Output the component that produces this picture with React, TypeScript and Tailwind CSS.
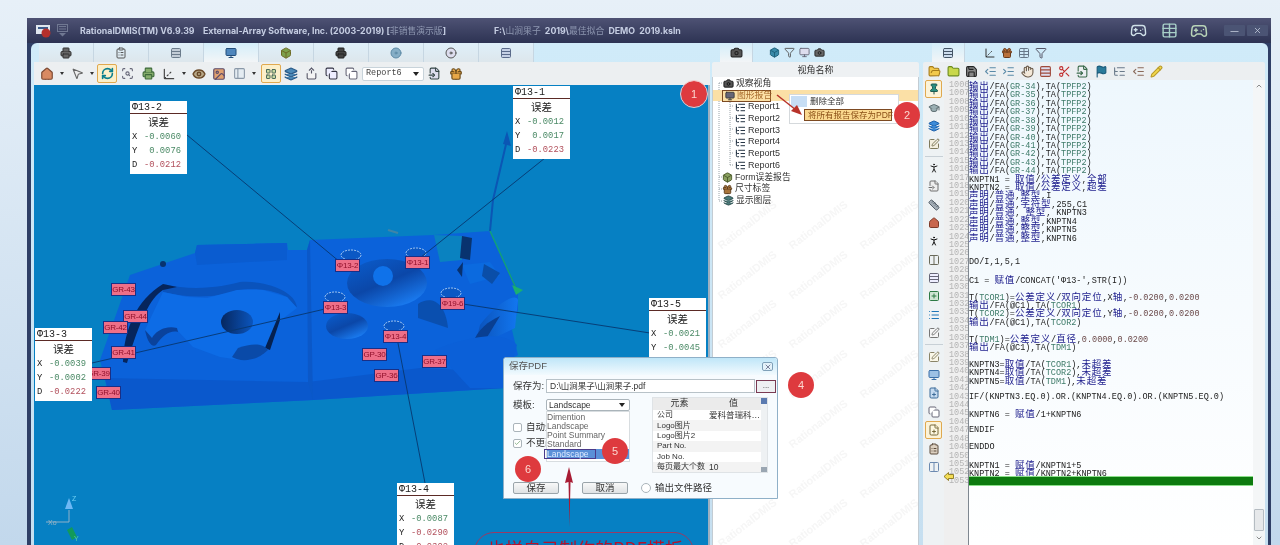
import type { ReactNode } from 'react';
import {
  House, MousePointer2, RefreshCw, ScanSearch, Printer, Axis3d, Eye, Image, PanelLeft, LayoutGrid, Layers, SquarePen,
  Save, Folder, FolderOpen, Hand, ListTree, X, Camera, Box, Filter, Monitor, Flag, Pencil, Gift, Copy, Share,
  IndentIncrease, IndentDecrease, Scissors, Pin, GraduationCap, Gamepad2, Table, Check, PersonStanding, Ruler,
  SquarePlus, List, FilePlus, FileInput, Columns2, ChevronDown, ChevronUp, ClipboardList, Disc,
} from 'lucide-react';

const cjk = '"Noto Sans CJK SC"';

/* ---------- small pieces ---------- */

function Tool({ children, active, wide }: { children: ReactNode; active?: boolean; wide?: boolean }) {
  return (
    <div className={`flex h-[19px] items-center justify-center ${wide ? 'w-[21px]' : 'w-[20px]'} ${active ? 'rounded-[2px] border border-[#e0a94f] bg-[#fcefc9]' : ''}`}>
      {children}
    </div>
  );
}

function Caret() {
  return <div className="h-0 w-0 mx-[3px] border-x-[2px] border-t-[3px] border-x-transparent border-t-[#333]" />;
}

function Tab({ children, active, w }: { children: ReactNode; active?: boolean; w: string }) {
  return (
    <div className={`flex h-[19px] items-center justify-center border-r border-[#c6d6e2] ${w} ${active ? 'bg-linear-to-b from-[#d4eefa] to-[#f2f5f7]' : 'bg-linear-to-b from-[#dff0fa] to-[#dde6ec]'}`}>
      {children}
    </div>
  );
}

function Callout({ name, rows, pos }: { name: string; rows: { k: string; v: string; tone: string }[]; pos: string }) {
  return (
    <div className={`absolute w-[57px] bg-white pb-[2px] text-[#222] ${pos}`}>
      <div className="h-[13px] border-b border-[#5b2a25] pl-[2px] text-[10px] leading-[13px] font-['Liberation_Mono',monospace]">{name}</div>
      <div className="h-[16px] text-center text-[10.5px] leading-[16px]" style={{ fontFamily: cjk }}>误差</div>
      {rows.map(r => (
        <div key={r.k} className="flex h-[14px] whitespace-pre pl-[2px] text-[8.8px] leading-[14px] font-['Liberation_Mono',monospace]">
          <span className="w-[12px]">{r.k}</span>
          <span className={r.tone}>{r.v}</span>
        </div>
      ))}
    </div>
  );
}

function Label({ text, pos }: { text: string; pos: string }) {
  return (
    <div className={`absolute flex h-[13px] w-[25px] items-center justify-center border border-[#1a2f86] bg-[#ee6f88] text-[8px] tracking-[-0.2px] text-[#8f0f2a] font-['Liberation_Sans',sans-serif] ${pos}`}>
      {text}
    </div>
  );
}

function Badge({ n, pos }: { n: number; pos: string }) {
  return (
    <div className={`absolute flex h-[26px] w-[26px] items-center justify-center rounded-full bg-[#de3a3e] text-[11px] text-[#fbd7d0] font-['Liberation_Sans',sans-serif] ${pos}`}>
      {n}
    </div>
  );
}

function Watermarks({ count }: { count: number }) {
  return (
    <div className="pointer-events-none absolute inset-0 grid grid-cols-3 content-start gap-x-[8px] gap-y-[38px] overflow-hidden pt-[145px]">
      {Array.from({ length: count }).map((_, i) => (
        <span key={i} className="-rotate-[38deg] whitespace-nowrap text-[11px] font-semibold text-[#f6f6f6] font-['Liberation_Sans',sans-serif]">RationalDMIS</span>
      ))}
    </div>
  );
}

/* ---------- 3D part ---------- */

function PartModel() {
  const wire = { stroke: '#d9ecff', strokeWidth: 0.7, strokeDasharray: '2 1', fill: '#0b58c4' };
  return (
    <svg className="absolute inset-0" width="674" height="460" viewBox="34 85 674 460" fill="none">
      <defs>
        <linearGradient id="bowl" x1="0" y1="0" x2="0.7" y2="1">
          <stop offset="0" stopColor="#0a5ecf" />
          <stop offset="0.55" stopColor="#0b47a8" />
          <stop offset="1" stopColor="#1a7cf2" />
        </linearGradient>
        <linearGradient id="dark" x1="0" y1="0" x2="1" y2="0">
          <stop offset="0" stopColor="#06275f" />
          <stop offset="1" stopColor="#0b55bd" />
        </linearGradient>
        <linearGradient id="cyl" x1="0" y1="0" x2="1" y2="0">
          <stop offset="0" stopColor="#0a50b8" />
          <stop offset="1" stopColor="#1277f0" />
        </linearGradient>
      </defs>

      {/* body */}
      <path d="M130,275 L195,253 L197,245 L287,243 L288,250 L307,250 L310,240 L433,235 L490,231 L518,290 L518,310 L512,330 L518,355 L505,362 L505,388 L313,400 L112,410 L105,380 L100,360 Z" fill="#0b62da" />
      <path d="M105,378 L308,382 L420,368 L505,372 L505,388 L313,400 L112,410 Z" fill="#0a58cc" />
      <path d="M195,253 L197,245 L287,243 L287,260 L197,265 Z" fill="#0a5cd0" />
      <path d="M307,250 L310,240 L313,400 L308,382 Z" fill="#0b58c8" />

      {/* s-shaped pocket */}
      <path d="M163,284 C195,292 225,286 240,282 C262,280 296,290 297,308 L287,297 C270,288 250,288 237,290 C225,296 195,300 163,292 Z" fill="#0a53bc" />
      <path d="M163,292 L187,297 L207,298 L237,290 L263,290 L287,297 L297,308 L277,323 L265,350 L240,360 L220,357 L193,347 L177,330 L163,328 L152,340 L145,330 L153,313 Z" fill="#0d6ce6" />
      <path d="M123,362 C124,330 136,300 163,284 L177,287 L163,290 C150,298 140,320 127,363 Z" fill="#06255c" />
      <path d="M145,330 C148,345 153,347 156,345 C163,335 170,330 178,332 L177,328 C165,325 155,332 152,338 Z" fill="#0a429c" />
      <path d="M280,312 L265,348 L270,350 L280,320 Z" fill="#05204f" />
      <path d="M238,348 C250,344 262,342 268,350 C256,362 240,362 232,357 Z" fill="#0a4aa8" />
      <ellipse cx="237" cy="322" rx="16" ry="12" fill="url(#dark)" />
      <circle cx="163" cy="264" r="3" fill="#08336f" />

      {/* right block holes */}
      <ellipse cx="387" cy="283" rx="40" ry="24" fill="url(#bowl)" />
      <ellipse cx="383" cy="276" rx="10" ry="10" fill="#0f72ea" />
      <ellipse cx="347" cy="326" rx="21" ry="13" fill="url(#bowl)" />
      <path d="M418,304 C430,296 445,300 448,328 L418,318 Z" fill="#0a4faf" />
      <path d="M434,235 L440,262 L462,260 L462,236 Z" fill="#0a82c0" />
      <path d="M462,236 L472,238 L470,260 L460,258 Z" fill="#08336f" />
      <path d="M462,265 L490,262 L500,276 L470,284 Z" fill="#0b6adf" />
      <path d="M484,264 L500,273 L492,284 L482,276 Z" fill="#0a4ea8" />
      <path d="M457,270 L463,262 L462,277 Z" fill="#07306e" />
      <path d="M480,325 C495,305 515,292 518,300 L515,328 C500,335 490,340 475,345 Z" fill="url(#cyl)" />
      <path d="M472,345 C478,328 488,322 500,316 L478,352 Z" fill="#093f92" />
      <path d="M435,350 C445,345 500,325 517,345 L512,362 L505,388 L470,388 Z" fill="#0b60d8" />

      {/* wire circles above the labels */}
      <ellipse cx="351" cy="255" rx="10" ry="5" {...wire} />
      <ellipse cx="416" cy="253" rx="10" ry="5" {...wire} />
      <ellipse cx="335" cy="297" rx="10" ry="5" {...wire} />
      <ellipse cx="451" cy="293" rx="10" ry="5" {...wire} />
      <ellipse cx="394" cy="326" rx="10" ry="5" {...wire} />

      {/* axes on the part */}
      <path d="M490,231 L493,200 L507,140" stroke="#0b56b4" strokeWidth="2" />
      <path d="M507,131 L511,146 L503,144 Z" fill="#0b56b4" />
      <path d="M490,231 L516,288" stroke="#12a07a" strokeWidth="1.5" />
      <path d="M512,285 L523,290 L516,295 Z" fill="#1bb070" />
      <path d="M388,230 L398,233" stroke="#3f84a8" strokeWidth="2" />

      {/* leader lines */}
      <path d="M187,135 L340,262 M545,158 L420,258 M92,363 L325,309 M650,333 L463,304 M425,483 L397,338" stroke="#08376e" strokeWidth="0.9" />

      {/* corner triad */}
      <path d="M69,522 L69,510 M69,522 L46,522" stroke="#8fb0c8" strokeWidth="1" />
      <path d="M69,498 L73,509 L65,509 Z" fill="#6db8f5" />
      <path d="M67,530 L72,527 L77,537 L72,540 Z" fill="#129a5a" />
      <text x="72" y="501" fontSize="7" fill="#6fd0f5" fontFamily="Liberation Sans">Z</text>
      <text x="48" y="525" fontSize="7" fill="#9ab4c4" fontFamily="Liberation Sans">Xo</text>
      <text x="74" y="541" fontSize="7" fill="#58d0a0" fontFamily="Liberation Sans">Y</text>
    </svg>
  );
}

/* ---------- editor ---------- */

const code: string[] = [
  ...[34, 35, 36, 37, 38, 39, 40, 41, 42, 43, 44].map(n => `输出/FA(GR-${n}),TA(TPFP2)`),
  'KNPTN1 = 取值/公差定义,全部',
  'KNPTN2 = 取值/公差定义,超差',
  '声明/普通,整型,I',
  '声明/普通,字符型,255,C1',
  '声明/普通, 整型, KNPTN3',
  '声明/普通,整型,KNPTN4',
  '声明/普通,整型,KNPTN5',
  '声明/普通,整型,KNPTN6',
  '',
  '',
  'DO/I,1,5,1',
  '',
  "C1 = 赋值/CONCAT('Φ13-',STR(I))",
  '',
  'T(TCOR1)=公差定义/双向定位,X轴,-0.0200,0.0200',
  '输出/FA(@C1),TA(TCOR1)',
  'T(TCOR2)=公差定义/双向定位,Y轴,-0.0200,0.0200',
  '输出/FA(@C1),TA(TCOR2)',
  '',
  'T(TDM1)=公差定义/直径,0.0000,0.0200',
  '输出/FA(@C1),TA(TDM1)',
  '',
  'KNPTN3=取值/TA(TCOR1),未超差',
  'KNPTN4=取值/TA(TCOR2),未超差',
  'KNPTN5=取值/TA(TDM1),未超差',
  '',
  'IF/(KNPTN3.EQ.0).OR.(KNPTN4.EQ.0).OR.(KNPTN5.EQ.0)',
  '',
  'KNPTN6 = 赋值/1+KNPTN6',
  '',
  'ENDIF',
  '',
  'ENDDO',
  '',
  'KNPTN1 = 赋值/KNPTN1+5',
  'KNPTN2 = 赋值/KNPTN2+KNPTN6',
];

function CodeText({ line }: { line: string }) {
  const parts = line.split(/([\u4e00-\u9fff]+|GR-\d+|TPFP2|TCOR\d|TDM1|-?0\.0\d+|\(@C1\))/).filter(Boolean);
  return (
    <>
      {parts.map((p, i) => {
        if (/[\u4e00-\u9fff]/.test(p)) {
          return <span key={i} className="text-[9.5px] tracking-[0.8px] text-[#1c1c8c]" style={{ fontFamily: cjk }}>{p}</span>;
        }
        if (/^(GR|TPFP|TCOR|TDM)/.test(p)) return <span key={i} className="text-[#3d7a68]">{p}</span>;
        if (/0\.0/.test(p)) return <span key={i} className="text-[#6b4a4a]">{p}</span>;
        return <span key={i}>{p}</span>;
      })}
    </>
  );
}

const sideTools = [
  { I: Pin, c: 'text-[#1f5b52] fill-[#2b8f80]', on: true },
  { I: GraduationCap, c: 'text-[#5c6c70] fill-[#9bb0b4]' },
  { I: Layers, c: 'text-[#1d5fa8] fill-[#3c8bd9]' },
  { I: SquarePen, c: 'text-[#7f7a5c] fill-[#f3efdf]' },
  null,
  { I: PersonStanding, c: 'text-[#222]' },
  { I: FileInput, c: 'text-[#6e6e6e] fill-[#eeeeee]' },
  { I: Ruler, c: 'text-[#55606a] fill-[#a3adb6]' },
  { I: House, c: 'text-[#7d3a28] fill-[#c8664d]' },
  { I: PersonStanding, c: 'text-[#111]' },
  { I: Columns2, c: 'text-[#6a6a5a]' },
  { I: Table, c: 'text-[#667] fill-[#eef]' },
  { I: SquarePlus, c: 'text-[#2d7a44] fill-[#cfe5d3]' },
  { I: List, c: 'text-[#1e76b8]' },
  { I: SquarePen, c: 'text-[#777] fill-[#f6f6f6]' },
  null,
  { I: SquarePen, c: 'text-[#8a8468] fill-[#faf7e8]' },
  { I: Monitor, c: 'text-[#3a6fa8] fill-[#9cc0e4]' },
  { I: FilePlus, c: 'text-[#3b6a98] fill-[#c4daf0]' },
  { I: Copy, c: 'text-[#667] fill-[#fff]' },
  { I: FilePlus, c: 'text-[#77683a] fill-[#fdf7e0]', on: true },
  { I: ClipboardList, c: 'text-[#5a4a3a] fill-[#dcd0c0]' },
  { I: Columns2, c: 'text-[#6c8ab0]' },
];

function Editor() {
  return (
    <div className="relative flex min-h-0 flex-1 bg-linear-to-b from-[#eef7fd] to-white">
      {/* side tools */}
      <div className="relative flex w-[21px] flex-col items-center bg-[#eef2f4] text-[#5b6a78]">
        {sideTools.map((t, i) =>
          t === null ? (
            <div key={i} className="my-[2px] h-px w-[18px] bg-[#c8d0d6]" />
          ) : (
            <div key={i} className={`flex h-[18.4px] w-[17px] shrink-0 items-center justify-center ${t.on ? 'rounded-[2px] border border-[#e0a94f] bg-[#fcf3d8]' : ''}`}>
              <t.I size={12} className={t.c} />
            </div>
          ),
        )}
      </div>
      {/* gutter */}
      <div className="relative w-[25px] overflow-hidden border-r border-[#7f8790] bg-[#efefef] pt-px text-[8.5px] leading-[8.43px] text-[#b3b3b3] font-['Liberation_Mono',monospace]">
        {[...code, ''].map((_, i) => (
          <div key={i} className="h-[8.43px] pl-[5px] whitespace-nowrap">{1006 + i}</div>
        ))}
      </div>
      {/* code */}
      <div className="relative min-w-0 flex-1 overflow-hidden pt-px text-[8.5px] leading-[8.43px] text-[#1c1c1c] font-['Liberation_Mono',monospace]">
        {code.map((l, i) => (
          <div key={i} className="h-[8.43px] whitespace-pre"><CodeText line={l} /></div>
        ))}
        <div className="h-[8.43px] bg-[#0d7a0f] outline outline-[#8be08a]" />
      </div>
      {/* scrollbar */}
      <div className="relative flex w-[12px] flex-col items-center justify-between bg-[#f4f6f7] pb-[3px] pt-[2px]">
        <ChevronUp size={8} className="text-[#555]" />
        <div className="mt-auto mb-[3px] h-[22px] w-[10px] rounded-[1px] border border-[#b5bcc2] bg-[#e6e8ea]" />
        <ChevronDown size={8} className="text-[#555]" />
      </div>
      {/* current line arrow */}
      <svg className="absolute left-[21px] top-[392px]" width="10" height="9" viewBox="0 0 10 9">
        <path d="M0,4.5 L4.5,0.5 V2.5 H9.5 V6.5 H4.5 V8.5 Z" fill="#f4dd55" stroke="#7b6a10" strokeWidth="0.8" />
      </svg>
    </div>
  );
}

/* ---------- app ---------- */

const leftTabs = [
  { I: Printer, c: 'text-[#333] fill-[#666]' },
  { I: ClipboardList, c: 'text-[#555]' },
  { I: Table, c: 'text-[#6b7b8b] fill-[#c2ccd6]' },
  { I: Monitor, c: 'text-[#234e7a] fill-[#4f87bd]' },
  { I: Box, c: 'text-[#6e6a24] fill-[#7da04a]' },
  { I: Printer, c: 'text-[#222] fill-[#444]' },
  { I: Disc, c: 'text-[#5d8aa6] fill-[#86aec6]' },
  { I: Disc, c: 'text-[#555] fill-[#dde]' },
  { I: Table, c: 'text-[#5a6a8a] fill-[#c5d0e5]' },
];

const treeRows = ['Report1', 'Report2', 'Report3', 'Report4', 'Report5', 'Report6'];

const menuRows: [string, string][] = [
  ['公司', '爱科普瑞科…'],
  ['Logo图片', ''],
  ['Logo图片2', ''],
  ['Part No.', ''],
  ['Job No.', ''],
  ['每页最大个数', '10'],
];

export default function App() {
  const g = 'text-[#4b8a66]';
  const r = 'text-[#b2505c]';
  return (
    <div
      className="relative h-[545px] w-[1280px] overflow-hidden bg-linear-to-b from-[#e7f0f8] to-[#c2d8ec] pl-[27px] pr-[9px] pt-[18px] blur-[0.35px] font-['Liberation_Sans',sans-serif]"
    >
      <div className="flex h-[527px] w-[1244px] flex-col">
        {/* title bar */}
        <div className="flex h-[25px] shrink-0 items-center bg-linear-to-b from-[#4e5274] to-[#2d3353] text-[9px] font-bold text-[#c5cde2]">
          <div className="flex h-full w-[50px] items-center gap-[4px] pl-[9px]">
            <svg width="17" height="15" viewBox="0 0 17 15">
              <rect x="0" y="2" width="14" height="9" fill="#dfe6ee" />
              <rect x="2" y="4" width="10" height="2" fill="#3a5a8a" />
              <circle cx="10" cy="10" r="4.5" fill="#b5302c" />
            </svg>
            <svg width="11" height="13" viewBox="0 0 11 13">
              <rect x="0.5" y="0.5" width="10" height="7" fill="none" stroke="#707892" />
              <path d="M2,2.5H9M2,5H9" stroke="#707892" />
              <path d="M2,9H9L5.5,12.5Z" fill="#707892" />
            </svg>
          </div>
          <span className="ml-[3px] whitespace-pre text-[8.8px]" style={{ fontFamily: `Inter, ${cjk}, sans-serif` }}>
            RationalDMIS(TM) V6.9.39    External-Array Software, Inc. (2003-2019) [<span className="font-normal text-[#8d96b0]">非销售演示版</span>]
          </span>
          <span className="ml-[48px] whitespace-pre text-[8.8px]" style={{ fontFamily: `Inter, ${cjk}, sans-serif` }}>
            F:\<span className="font-normal text-[#8d96b0]">山涧果子</span>  2019\<span className="font-normal text-[#8d96b0]">最佳拟合</span>  DEMO  2019.ksln
          </span>
          <div className="ml-auto flex items-center pr-[3px]">
            <Gamepad2 size={17} className="mr-[14px] text-[#cfe0e8]" />
            <Table size={17} className="mr-[12px] text-[#a8d0c8]" />
            <Gamepad2 size={18} className="mr-[16px] text-[#b8d4b8]" />
            <div className="flex h-[11px] w-[21px] items-center justify-center rounded-[1px] bg-[#4b5474] text-[8px] text-[#c8d0e0]">—</div>
            <div className="ml-[2px] flex h-[11px] w-[21px] items-center justify-center rounded-[1px] bg-[#4b5474]"><X size={9} className="text-[#c8d0e0]" /></div>
          </div>
        </div>

        {/* frame */}
        <div className="flex min-h-0 flex-1 bg-[#2f3f66] pl-[4px] pr-[3px]">
          <div className="flex min-w-0 flex-1 rounded-t-[6px] bg-linear-to-b from-[#d0ebf9] to-[#c6dff0]">
            {/* left column */}
            <div className="flex w-[679px] shrink-0 flex-col pl-[3px]">
              <div className="flex h-[19px] shrink-0 pl-[5px]">
                {leftTabs.map((t, i) => (
                  <Tab key={i} w="w-[55px]" active={i === 3}><t.I size={12} className={t.c} /></Tab>
                ))}
              </div>
              <div className="flex h-[23px] shrink-0 items-center bg-[#eceff1] pl-[3px]">
                <Tool><House size={14} className="text-[#7d4a33] fill-[#d98a62]" /></Tool><Caret />
                <Tool><MousePointer2 size={13} className="text-[#666] fill-[#eee]" /></Tool><Caret />
                <Tool active><RefreshCw size={13} strokeWidth={3} className="text-[#0b7f8e]" /></Tool>
                <Tool wide><ScanSearch size={13} className="text-[#667]" /></Tool>
                <Tool><Printer size={13} className="text-[#3d6a3a] fill-[#86ad6c]" /></Tool>
                <div className="w-[1px]" />
                <Tool><Axis3d size={14} className="text-[#444]" /></Tool><Caret />
                <Tool><Eye size={14} strokeWidth={2.5} className="text-[#6a4a2a] fill-[#b8a888]" /></Tool>
                <Tool><Image size={14} className="text-[#5a4a6a] fill-[#e0a070]" /></Tool>
                <Tool><PanelLeft size={13} className="text-[#8a98a8] fill-[#e4ecf2]" /></Tool><Caret />
                <div className="w-[2px]" />
                <Tool active><LayoutGrid size={12} className="text-[#4a6a5a] fill-[#c8d8a0]" /></Tool>
                <Tool><Layers size={14} className="text-[#2a5a88] fill-[#4c8ab8]" /></Tool>
                <Tool><Share size={13} className="text-[#556] fill-[#f4f4f4]" /></Tool>
                <Tool><Copy size={13} className="text-[#334] fill-[#eef]" /></Tool>
                <Tool><Copy size={13} className="text-[#667] fill-[#fff]" /></Tool>
                <div className="ml-[1px] flex h-[14px] w-[62px] items-center justify-between rounded-[2px] border border-[#c8d3da] bg-white pl-[3px] pr-[4px] text-[8.5px] text-[#444] font-['Liberation_Mono',monospace]">
                  Report6
                  <div className="h-0 w-0 border-x-[3px] border-t-[4px] border-x-transparent border-t-[#222]" />
                </div>
                <Tool><FileInput size={13} className="text-[#344] fill-[#dde]" /></Tool>
                <div className="w-[2px]" />
                <Tool><Gift size={14} className="text-[#6a4a1a] fill-[#e8a848]" /></Tool>
              </div>
              {/* canvas */}
              <div className="relative min-h-0 flex-1 overflow-hidden border-r-2 border-[#9db0c0] bg-[#0680c3]">
                <PartModel />
                <Label text="GR-43" pos="left-[77px] top-[198px]" />
                <Label text="GR-44" pos="left-[89px] top-[225px]" />
                <Label text="GR-42" pos="left-[69px] top-[236px]" />
                <Label text="GR-41" pos="left-[77px] top-[261px]" />
                <Label text="GR-39" pos="left-[52px] top-[282px]" />
                <Label text="GR-40" pos="left-[62px] top-[301px]" />
                <Label text="Φ13-2" pos="left-[301px] top-[174px]" />
                <Label text="Φ13-1" pos="left-[371px] top-[171px]" />
                <Label text="Φ13-3" pos="left-[289px] top-[216px]" />
                <Label text="Φ19-6" pos="left-[406px] top-[212px]" />
                <Label text="Φ13-4" pos="left-[349px] top-[245px]" />
                <Label text="GP-30" pos="left-[328px] top-[263px]" />
                <Label text="GP-36" pos="left-[340px] top-[284px]" />
                <Label text="GR-37" pos="left-[388px] top-[270px]" />
                <Callout name="Φ13-2" pos="left-[96px] top-[16px]" rows={[{ k: 'X', v: '-0.0060', tone: g }, { k: 'Y', v: ' 0.0076', tone: g }, { k: 'D', v: '-0.0212', tone: r }]} />
                <Callout name="Φ13-1" pos="left-[479px] top-[1px]" rows={[{ k: 'X', v: '-0.0012', tone: g }, { k: 'Y', v: ' 0.0017', tone: g }, { k: 'D', v: '-0.0223', tone: r }]} />
                <Callout name="Φ13-3" pos="left-[1px] top-[243px]" rows={[{ k: 'X', v: '-0.0039', tone: g }, { k: 'Y', v: '-0.0002', tone: g }, { k: 'D', v: '-0.0222', tone: r }]} />
                <Callout name="Φ13-5" pos="left-[615px] top-[213px]" rows={[{ k: 'X', v: '-0.0021', tone: g }, { k: 'Y', v: '-0.0045', tone: g }]} />
                <Callout name="Φ13-4" pos="left-[363px] top-[398px]" rows={[{ k: 'X', v: '-0.0087', tone: g }, { k: 'Y', v: '-0.0290', tone: r }, { k: 'D', v: '-0.0302', tone: r }]} />
              </div>
            </div>

            {/* middle column */}
            <div className="flex w-[211px] shrink-0 flex-col px-[2px]">
              <div className="flex h-[19px] shrink-0 items-center pl-[8px]">
                <Tab w="w-[33px]" active><Camera size={13} className="text-[#222] fill-[#555]" /></Tab>
                <div className="ml-[16px] flex items-center gap-[4px]">
                  <Box size={11} className="text-[#1d5f78] fill-[#3a8aa8]" />
                  <Filter size={11} className="text-[#555]" />
                  <Monitor size={11} className="text-[#667] fill-[#dde]" />
                  <Camera size={11} className="text-[#222] fill-[#666]" />
                </div>
              </div>
              <div className="flex h-[15px] shrink-0 items-center justify-center rounded-t-[2px] bg-[#eef1f3] text-[9px] text-[#333]" style={{ fontFamily: cjk }}>视角名称</div>
              <div className="relative min-h-0 flex-1 overflow-hidden whitespace-nowrap border-x border-[#c3ccd3] bg-white pt-[1px] text-[8.8px] leading-[11.7px] text-[#333]" style={{ fontFamily: `"Liberation Sans", ${cjk}, sans-serif` }}>
                <Watermarks count={27} />
                {/* tree lines */}
                <svg className="absolute left-0 top-0" width="30" height="130" fill="none" stroke="#9aa4aa" strokeWidth="1" strokeDasharray="1 1">
                  <path d="M6,6 V124 M6,6 H9 M6,17 H8 M6,100 H9 M6,112 H9 M6,124 H9 M17,23 V88 M17,29 H21 M17,41 H21 M17,52 H21 M17,64 H21 M17,76 H21 M17,88 H21" />
                </svg>
                <div className="relative flex h-[11.7px] items-center pl-[10px]"><Camera size={11} className="mr-[2px] text-[#111] fill-[#555]" />观察视角</div>
                <div className="relative flex h-[11.7px] items-center bg-[#fbe0a6] pl-[9px]">
                  <div className="flex h-[12px] w-[49px] items-center border border-[#7d4a22] text-[#a76a2c]"><Monitor size={10} className="mx-[2px] shrink-0 text-[#333] fill-[#667]" />图形报告</div>
                </div>
                {treeRows.map(t => (
                  <div key={t} className="relative flex h-[11.7px] items-center pl-[22px] text-[9px]">
                    <ListTree size={11} className="mr-[2px] text-[#123]" />{t}
                  </div>
                ))}
                <div className="relative flex h-[11.7px] items-center pl-[9px]"><Box size={11} className="mr-[2px] text-[#4a5a2a] fill-[#8aa060]" />Form误差报告</div>
                <div className="relative flex h-[11.7px] items-center pl-[9px]"><Gift size={11} className="mr-[2px] text-[#5a3a1a] fill-[#a8743a]" />尺寸标签</div>
                <div className="relative flex h-[11.7px] items-center pl-[10px]"><Layers size={11} className="mr-[2px] text-[#2a4a4a] fill-[#4a7a7a]" />显示图层</div>
              </div>
            </div>

            {/* right column */}
            <div className="flex min-w-0 flex-1 flex-col pl-[2px] pr-[3px]">
              <div className="flex h-[19px] shrink-0 items-center pl-[9px]">
                <Tab w="w-[33px]" active><Table size={12} className="text-[#456] fill-[#cde]" /></Tab>
                <div className="ml-[19px] flex items-center gap-[5px]">
                  <Axis3d size={12} className="text-[#333]" />
                  <Gift size={12} className="text-[#6a3a1a] fill-[#b8703a]" />
                  <Table size={12} className="text-[#678]" />
                  <Filter size={12} className="text-[#556]" />
                </div>
              </div>
              <div className="flex h-[18px] shrink-0 items-center gap-[5.5px] rounded-t-[2px] bg-[#eceff1] pl-[5px]">
                <FolderOpen size={13} className="text-[#a67c1a] fill-[#f2c94c]" />
                <Folder size={13} className="text-[#6a8a1a] fill-[#c8d84c]" />
                <Save size={13} className="text-[#222] fill-[#888]" />
                <IndentDecrease size={13} className="text-[#5a8aa8]" />
                <IndentIncrease size={13} className="text-[#5a8aa8]" />
                <Hand size={13} className="text-[#6a5a4a] fill-[#f4e8d8]" />
                <Table size={13} className="text-[#a04a3a] fill-[#dde]" />
                <Scissors size={13} className="text-[#c02a2a]" />
                <FileInput size={13} className="text-[#3a6a4a]" />
                <Flag size={13} className="text-[#1a5a7a] fill-[#2a7a9a]" />
                <ListTree size={13} className="text-[#6a7a8a]" />
                <IndentDecrease size={13} className="text-[#8a6a5a]" />
                <Pencil size={13} className="text-[#b89a2a] fill-[#f2d84c]" />
              </div>
              <Editor />
            </div>
          </div>
        </div>
      </div>

      {/* context menu */}
      <div className="absolute left-[789px] top-[94px] h-[30px] w-[110px] whitespace-nowrap border border-[#d5d9dc] bg-white text-[8.5px] text-[#333]" style={{ fontFamily: `"Liberation Sans", ${cjk}, sans-serif` }}>
        <div className="flex h-[13px] items-center">
          <div className="ml-px mr-[3px] h-[11px] w-[16px] bg-[#c7def5]" />删除全部
        </div>
        <div className="ml-[14px] mt-[1px] flex h-[12px] w-[88px] items-center border-[1.5px] border-[#7d4a22] bg-[#fbd98f] pl-[3px] text-[#8a4f16]">将所有报告保存为PDF</div>
      </div>

      {/* arrows */}
      <svg className="pointer-events-none absolute inset-0 z-10" width="1280" height="545" viewBox="0 0 1280 545" fill="none">
        <path d="M777,95 L796,110" stroke="#b8332a" strokeWidth="1.5" />
        <path d="M802,115 L791,111 L797,105 Z" fill="#b8332a" />
      </svg>

      {/* save dialog */}
      <div className="absolute left-[503px] top-[357px] z-10 flex h-[142px] w-[275px] flex-col whitespace-nowrap rounded-t-[3px] border border-[#8fb0c8] bg-[#f7fbfe] text-[9.5px] text-[#333]" style={{ fontFamily: `"Liberation Sans", ${cjk}, sans-serif` }}>
        <div className="flex h-[17px] shrink-0 items-center justify-between rounded-t-[3px] bg-linear-to-b from-[#bfe6f8] to-[#f2fafe] pl-[5px] pr-[4px] text-[#555]">
          保存PDF
          <div className="flex h-[9px] w-[11px] items-center justify-center rounded-[2px] border border-[#7fa0b8] bg-[#e4f2fa]"><X size={8} className="text-[#446]" /></div>
        </div>
        <div className="mt-[4px] flex h-[14px] items-center pl-[9px]">
          <span className="w-[33px]">保存为:</span>
          <div className="flex h-[14px] w-[209px] items-center border border-[#b8c2c8] bg-white pl-[3px] text-[8.5px]">D:\山涧果子\山涧果子.pdf</div>
          <div className="ml-[1px] flex h-[13px] w-[20px] items-center justify-center border border-[#7a3a52] bg-[#eef0f2] text-[8px]">...</div>
        </div>
        <div className="mt-[4px] flex pl-[9px]">
          <div className="relative w-[139px] pt-[2px]">
            <div className="flex h-[12px] items-center">
              <span className="w-[33px]">模板:</span>
              <div className="flex h-[12px] w-[84px] items-center justify-between rounded-[2px] border border-[#aab4ba] bg-white pl-[2px] pr-[4px] text-[8.5px]">
                Landscape
                <div className="h-0 w-0 border-x-[3px] border-t-[4px] border-x-transparent border-t-[#222]" />
              </div>
            </div>
            <div className="mt-[11px] flex h-[10px] items-center gap-[4px]">
              <div className="h-[9px] w-[9px] rounded-[2px] border border-[#aab4ba] bg-white" />自动生
            </div>
            <div className="mt-[6px] flex h-[10px] items-center gap-[4px]">
              <div className="flex h-[9px] w-[9px] items-center justify-center rounded-[2px] border border-[#aab4ba] bg-white"><Check size={8} className="text-[#4a8a4a]" /></div>不更改
            </div>
            {/* dropdown list */}
            <div className="absolute left-[33px] top-[14px] w-[84px] border border-[#d8dde0] bg-white pt-[1px] text-[8.5px] leading-[9px] text-[#666]">
              <div>Dimention</div>
              <div>Landscape</div>
              <div>Point Summary</div>
              <div>Standard</div>
              <div className="bg-[#5a90d8] text-[#dfeaff]">
                <div className="-ml-[3px] h-[10px] w-[52px] border border-[#4a3a8a] pl-[2px] leading-[8px]">Landscape</div>
              </div>
              <div className="h-[2px]" />
            </div>
          </div>
          {/* element table */}
          <div className="flex h-[76px] w-[116px] border border-[#dfe3e6] bg-white text-[8.5px]">
            <div className="min-w-0 flex-1">
              <div className="flex h-[12px] items-center bg-[#ebebeb] text-center text-[9px]">
                <span className="w-[53px]">元素</span>
                <span className="flex-1">值</span>
              </div>
              {menuRows.map(([a, b], i) => (
                <div key={a} className={`flex h-[10.4px] items-center pl-[4px] ${i % 2 ? 'bg-[#f3f3f3]' : ''}`}>
                  <span className="w-[52px] overflow-hidden text-[8px]">{a}</span>
                  <span>{b}</span>
                </div>
              ))}
            </div>
            <div className="flex w-[6px] flex-col justify-between bg-[#eef1f3]">
              <div className="h-[6px] bg-[#5a7ab0]" />
              <div className="h-[5px] bg-[#9aa6b2]" />
            </div>
          </div>
        </div>
        <div className="mt-[9px] flex h-[12px] items-center pl-[9px]">
          <div className="flex h-[12px] w-[46px] items-center justify-center rounded-[2px] border border-[#9aa4aa] bg-linear-to-b from-[#f8f8f8] to-[#dfe2e4]">保存</div>
          <div className="ml-[23px] flex h-[12px] w-[46px] items-center justify-center rounded-[2px] border border-[#9aa4aa] bg-linear-to-b from-[#f8f8f8] to-[#dfe2e4]">取消</div>
          <div className="ml-[13px] h-[10px] w-[10px] rounded-full border border-[#aab4ba] bg-white" />
          <span className="ml-[4px]">输出文件路径</span>
        </div>
      </div>

      {/* annotations */}
      <Badge n={1} pos="z-20 left-[681px] top-[81px] outline outline-[#f4c8c8]" />
      <Badge n={2} pos="z-20 left-[894px] top-[102px]" />
      <Badge n={4} pos="z-20 left-[788px] top-[372px]" />
      <Badge n={5} pos="z-20 left-[602px] top-[438px]" />
      <Badge n={6} pos="z-20 left-[515px] top-[456px]" />
      <svg className="pointer-events-none absolute inset-0 z-20" width="1280" height="545" viewBox="0 0 1280 545" fill="none">
        <path d="M569,467 L573,483 L570.5,482 L569.5,527 L568.5,482 L565,483 Z" fill="#a81c34" />
      </svg>
      <div className="absolute left-[474px] top-[532px] z-20 h-[40px] w-[220px] whitespace-nowrap rounded-[20px] border-[1.5px] border-[#9a3a64] pl-[12px] pt-[5px] text-[18px] leading-[20px] text-[#b3122c]" style={{ fontFamily: cjk }}>
        也样自己制作的PDF模板
      </div>
    </div>
  );
}
